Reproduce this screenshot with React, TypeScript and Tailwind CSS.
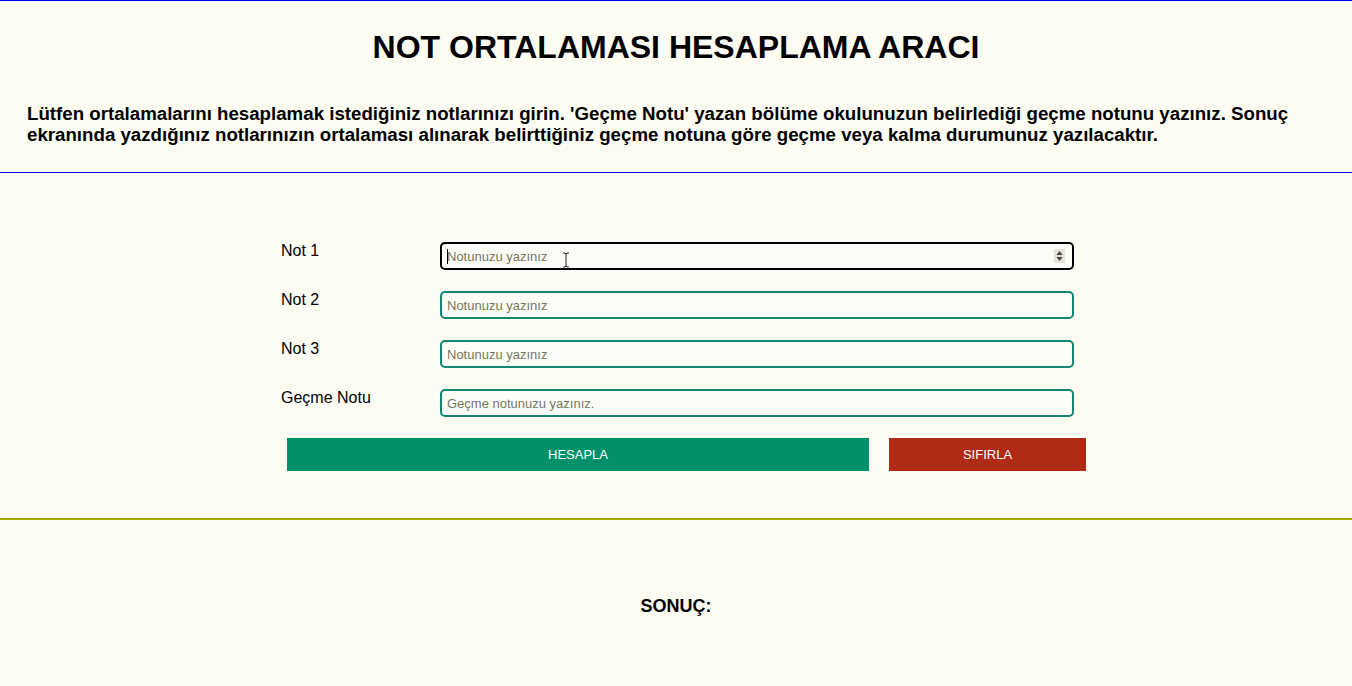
import { useState } from "react";

const fields = [
  { label: "Not 1", placeholder: "Notunuzu yazınız" },
  { label: "Not 2", placeholder: "Notunuzu yazınız" },
  { label: "Not 3", placeholder: "Notunuzu yazınız" },
  { label: "Geçme Notu", placeholder: "Geçme notunuzu yazınız." },
];

export default function App() {
  const [values, setValues] = useState<string[]>(["", "", "", ""]);
  const [result, setResult] = useState("");

  const handleCalc = () => {
    const notes = values.slice(0, 3).map((v) => parseFloat(v) || 0);
    const avg = notes.reduce((a, b) => a + b, 0) / notes.length;
    const pass = parseFloat(values[3]) || 0;
    setResult(`${avg.toFixed(2)} - ${avg >= pass ? "GEÇTİNİZ" : "KALDINIZ"}`);
  };

  const handleReset = () => {
    setValues(["", "", "", ""]);
    setResult("");
  };

  return (
    <div className="min-h-[686px] bg-[#fcfcf3] border-t border-[#0000ff] font-['Liberation_Sans',Arial,sans-serif] text-black">
      {/* header */}
      <div className="border-b border-[#0000ff] pt-[28px] pb-[27px] px-[27px]">
        <h1 className="text-center text-[32px] font-bold leading-[37px]">
          NOT ORTALAMASI HESAPLAMA ARACI
        </h1>
        <p className="mt-[37px] text-[18.7px] font-bold leading-[21px]">
          Lütfen ortalamalarını hesaplamak istediğiniz notlarınızı girin. 'Geçme Notu' yazan bölüme okulunuzun
          belirlediği geçme notunu yazınız. Sonuç ekranında yazdığınız notlarınızın ortalaması alınarak belirttiğiniz
          geçme notuna göre geçme veya kalma durumunuz yazılacaktır.
        </p>
      </div>

      {/* form */}
      <div className="border-b-2 border-[#a6a600] pt-[69px] pb-[47px]">
        <div className="ml-[281px] w-[806px] flex flex-col gap-[21px]">
          {fields.map((f, i) => (
            <div key={f.label} className="flex items-start">
              <label className="w-[159px] pt-[2px] text-[16px] leading-[14px] text-black">
                {f.label}
              </label>
              <div className="relative">
                <input
                  type="text"
                  value={values[i]}
                  onChange={(e) =>
                    setValues((prev) => prev.map((v, j) => (j === i ? e.target.value : v)))
                  }
                  placeholder={f.placeholder}
                  className={`w-[634px] h-[28px] rounded-[5px] border-2 bg-white/40 px-[5px] text-[13px] outline-none placeholder:text-[#76765f] ${
                    i === 0 ? "border-black" : "border-[#13866f]"
                  }`}
                />
                {i === 0 && (
                  <>
                    <span className="absolute left-[7px] top-[7px] h-[15px] w-px bg-black" />
                    <svg
                      className="absolute right-[9px] top-[7px]"
                      width="11"
                      height="14"
                      viewBox="0 0 11 14"
                    >
                      <rect x="0" y="0" width="11" height="14" fill="#e6e4d8" />
                      <path d="M5.5 2 L8.5 6 L2.5 6 Z" fill="#444" />
                      <path d="M5.5 12 L8.5 8 L2.5 8 Z" fill="#444" />
                    </svg>
                    <svg
                      className="absolute left-[122px] top-[10px]"
                      width="8"
                      height="16"
                      viewBox="0 0 8 16"
                    >
                      <path
                        d="M1 1 H3 L4 2 L5 1 H7 M4 2 V14 M1 15 H3 L4 14 L5 15 H7"
                        stroke="#222"
                        strokeWidth="1"
                        fill="none"
                      />
                    </svg>
                  </>
                )}
              </div>
            </div>
          ))}

          <div className="flex gap-[20px] pl-[6px]">
            <button
              onClick={handleCalc}
              className="w-[582px] h-[33px] bg-[#01916a] text-white text-[13px]"
            >
              HESAPLA
            </button>
            <button
              onClick={handleReset}
              className="w-[197px] h-[33px] bg-[#b02a16] text-white text-[13px]"
            >
              SIFIRLA
            </button>
          </div>
        </div>
      </div>

      {/* result */}
      <div className="pt-[76px] pb-[40px] text-center">
        <h3 className="text-[18px] font-bold leading-[21px]">SONUÇ: {result}</h3>
      </div>
    </div>
  );
}
